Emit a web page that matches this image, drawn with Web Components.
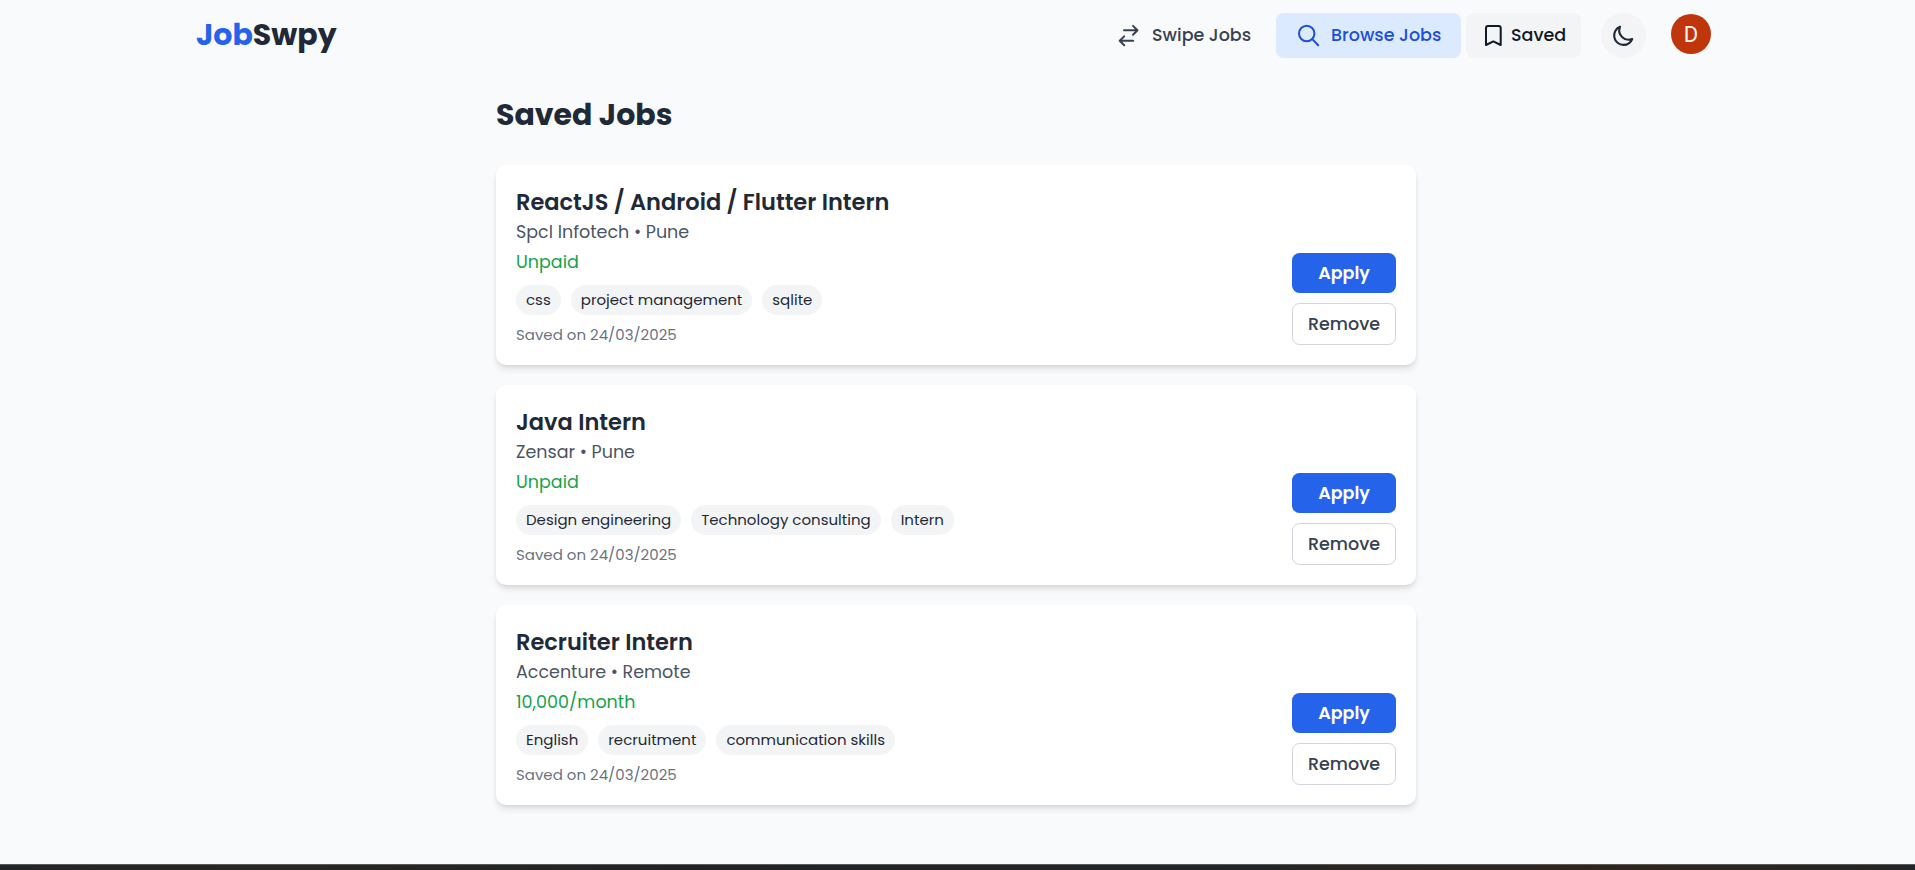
<!DOCTYPE html>
<html lang="en">
<head>
<meta charset="utf-8">
<title>JobSwpy</title>
<style>
html,body{margin:0;height:100%;overflow:hidden}
body{background:#f9fafc;font-family:Poppins,Inter,sans-serif;color:#1f2937}
</style>
</head>
<body>
<job-app></job-app>
<script>
const define = (name, html) => customElements.define(name, class extends HTMLElement {
  connectedCallback() {
    if (this.shadowRoot) return;
    const t = document.createElement('template');
    t.innerHTML = typeof html === 'function' ? html(this) : html;
    this.attachShadow({mode: 'open'}).append(t.content.cloneNode(true));
  }
});

define('job-app', `
<style>
:host{display:flex;flex-direction:column;height:870px}
main{flex:1;width:920px;margin-left:496px}
h1{margin:0 0 27px;padding-top:20px;font-size:30px;line-height:46px;font-weight:700}
.list{display:flex;flex-direction:column;gap:20px}
footer{height:5px;border-top:1px solid #58595b;background:linear-gradient(90deg,#242528,#292623 14%,#232326 35%,#242528 66%,#2d261f 73%,#33251a 85%,#282522 96%,#242528)}
</style>
<app-header></app-header>
<main>
<h1>Saved Jobs</h1>
<div class="list">
<job-card name="ReactJS / Android / Flutter Intern" org="Spcl Infotech • Pune" pay="Unpaid" tags="css|project management|sqlite"></job-card>
<job-card name="Java Intern" org="Zensar • Pune" pay="Unpaid" tags="Design engineering|Technology consulting|Intern"></job-card>
<job-card name="Recruiter Intern" org="Accenture • Remote" pay="10,000/month" tags="English|recruitment|communication skills"></job-card>
</div>
</main>
<footer></footer>`);

define('app-header', `
<style>
:host{display:flex;align-items:flex-start;justify-content:space-between;height:72px;box-sizing:border-box;padding:13px 204px 0 196px}
.logo{font-size:30px;font-weight:700;line-height:44px}
.logo span{color:#2563eb}
nav{display:flex}
.moon{display:grid;place-items:center;width:45px;height:45px;border-radius:50%;background:#f3f4f6;margin-left:20px}
.avatar{display:grid;place-items:center;width:40px;height:40px;border-radius:50%;background:#bf360c;color:#fbf1ed;font:400 22px/41px Roboto,sans-serif;margin:1px 0 0 25px}
svg{display:block;fill:none;stroke:currentColor;stroke-width:2;stroke-linecap:round;stroke-linejoin:round}
</style>
<div class="logo"><span>Job</span>Swpy</div>
<nav>
<nav-item style="--fg:#374151;--pad:19px;--gap:11px;--w:175px">
<svg slot="icon" width="25" height="25" viewBox="0 0 25 25"><path d="M8 7.3h13.3M17 2.9l4.5 4.4-4.5 4.4M17.2 17.8H3.9M8.2 13.4l-4.5 4.4 4.5 4.4"/></svg>
Swipe Jobs</nav-item>
<nav-item style="--fg:#1d4ed8;--bg:#dbeafe;--pad:20px;--gap:10px;--w:185px;margin-left:4px">
<svg slot="icon" width="25" height="25" viewBox="0 0 25 25"><circle cx="10.7" cy="10.5" r="7.7"/><path d="m16.3 16.1 5.9 6.1"/></svg>
Browse Jobs</nav-item>
<nav-item style="--fg:#111827;--bg:#f3f4f6;--pad:15px;--gap:5px;--w:115px;margin-left:5px">
<svg slot="icon" width="25" height="25" viewBox="0 0 25 25"><path d="M5 22V5a2 2 0 0 1 2-2h10.7a2 2 0 0 1 2 2v17l-7.35-3.6z"/></svg>
Saved</nav-item>
<span class="moon"><svg width="25" height="25" viewBox="0 0 24 24"><path d="M20.354 15.354A9 9 0 0 1 8.646 3.646 9.003 9.003 0 0 0 12 21a9.003 9.003 0 0 0 8.354-5.646z"/></svg></span>
<span class="avatar">D</span>
</nav>`);

define('nav-item', `
<style>
:host{display:flex;align-items:center;box-sizing:border-box;width:var(--w);height:45px;padding-left:var(--pad);gap:var(--gap);border-radius:7.5px;background:var(--bg,transparent);color:var(--fg);font-size:17.5px;font-weight:500;white-space:nowrap}
span{line-height:44px;height:45px}
</style>
<slot name="icon"></slot><span><slot></slot></span>`);

define('tag-pill', `
<style>:host{display:block;height:30px;padding:0 10px;border-radius:15px;background:#f3f4f6;font-size:15px;line-height:30px;white-space:nowrap}</style><slot></slot>`);

define('ui-button', `
<style>
:host{display:block;box-sizing:border-box;width:104px;height:40px;border-radius:7.5px;background:#2563eb;color:#fff;font-size:17.5px;font-weight:600;line-height:40px;text-align:center}
:host([outline]){height:42px;border:1px solid #d1d5db;background:#fff;color:#374151;font-weight:500}
</style><slot></slot>`);

define('job-card', el => {
  const a = n => el.getAttribute(n);
  const tags = a('tags').split('|').map(t => `<tag-pill>${t}</tag-pill>`).join('');
  return `
<style>
:host{display:flex;justify-content:space-between;align-items:flex-end;box-sizing:border-box;height:200px;padding:20px;border-radius:10px;background:#fff;box-shadow:0 5px 7.5px -1.25px rgb(0 0 0/.1),0 2.5px 5px -2.5px rgb(0 0 0/.1)}
.info{height:160px}
h2{margin:0;font-size:22.5px;line-height:34px;font-weight:600}
p{margin:0;line-height:30px;font-size:17.5px}
.org{color:#4b5563;margin-top:-2px}
.pay{color:#16a34a}
.tags{display:flex;gap:10px;margin-top:8px}
.date{font-size:15px;color:#6b7280;margin-top:5px}
.acts{display:flex;flex-direction:column;gap:10px}
</style>
<div class="info">
<h2>${a('name')}</h2>
<p class="org">${a('org')}</p>
<p class="pay">${a('pay')}</p>
<div class="tags">${tags}</div>
<p class="date">Saved on 24/03/2025</p>
</div>
<div class="acts"><ui-button>Apply</ui-button><ui-button outline>Remove</ui-button></div>`;
});
</script>
</body>
</html>
